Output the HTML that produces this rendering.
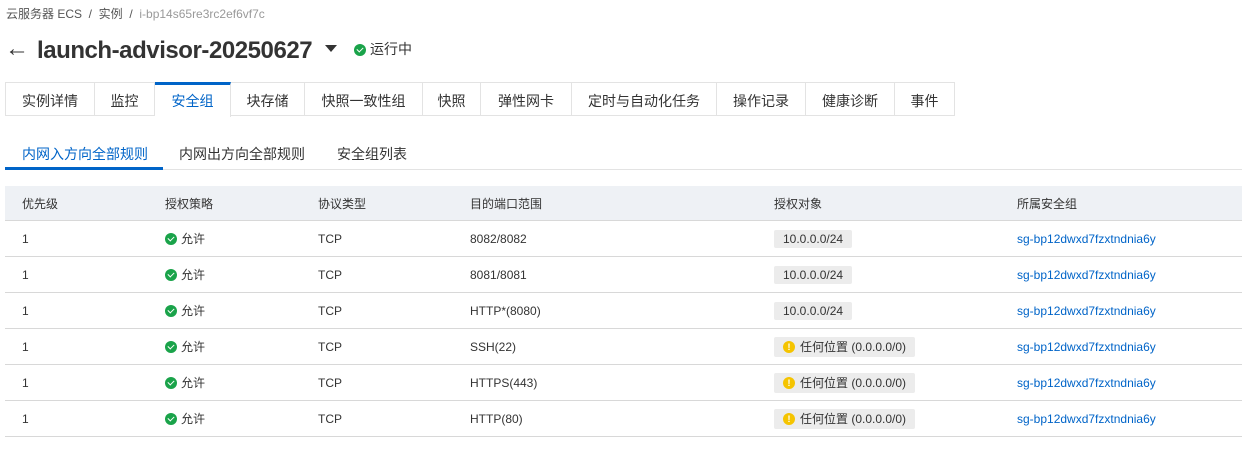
<!DOCTYPE html>
<html><head><meta charset="utf-8"><style>
body{margin:0;width:1242px;height:452px;background:#fff;font-family:"Liberation Sans","Noto Sans CJK SC",sans-serif;color:#333;position:relative;overflow:hidden}
.a{position:absolute;white-space:nowrap}
.tab{position:absolute;top:82px;height:34px;border:1px solid #e3e3e3;border-left:none;font-size:14px;line-height:36px;text-align:center;color:#333;box-sizing:border-box}
.row{position:absolute;left:5px;width:1237px;height:36px;border-bottom:1px solid #d8d8d8;font-size:12px;box-sizing:border-box}
.row span{position:absolute;top:0;line-height:36px}
.ok{display:inline-block;width:12px;height:12px;border-radius:50%;background:#1aa34a;vertical-align:-2px;margin-right:4px;position:relative}
.ok:after{content:"";position:absolute;left:3px;top:3px;width:5px;height:3px;border-left:1.5px solid #fff;border-bottom:1.5px solid #fff;transform:rotate(-45deg)}
.tag{background:#ececec;border-radius:2px;padding:0 9px;line-height:18px!important;top:9px!important;height:18px}
.warn{display:inline-block;width:12px;height:12px;border-radius:50%;background:#f5c400;vertical-align:top;margin:3px 5px 0 0;color:#fff;font-size:9px;line-height:12px;text-align:center;font-weight:bold;font-style:normal}
.lnk{color:#0064c8}
</style></head><body>
<div class="a" style="left:6px;top:5px;font-size:12px;color:#555">云服务器 ECS &nbsp;/&nbsp; 实例 &nbsp;/&nbsp; <span style="color:#999">i-bp14s65re3rc2ef6vf7c</span></div>
<div class="a" style="left:5px;top:33px;font-size:24px;color:#333;line-height:32px">←</div>
<div class="a" style="left:37px;top:35px;font-size:24px;font-weight:bold;color:#333;line-height:32px;letter-spacing:-0.45px">launch-advisor-20250627</div>
<div class="a" style="left:325px;top:45px;width:0;height:0;border-left:6px solid transparent;border-right:6px solid transparent;border-top:7px solid #333"></div>
<div class="a" style="left:354px;top:40px;font-size:14px;line-height:18px"><span class="ok"></span>运行中</div>
<div class="tab" style="left:5px;width:90px;border-left:1px solid #e3e3e3">实例详情</div>
<div class="tab" style="left:95px;width:60px">监控</div>
<div class="tab" style="left:155px;width:76px;border-top:3px solid #0064c8;border-bottom:none;color:#0064c8;line-height:32px;height:35px">安全组</div>
<div class="tab" style="left:231px;width:74px">块存储</div>
<div class="tab" style="left:305px;width:118px">快照一致性组</div>
<div class="tab" style="left:423px;width:58px">快照</div>
<div class="tab" style="left:481px;width:91px">弹性网卡</div>
<div class="tab" style="left:572px;width:145px">定时与自动化任务</div>
<div class="tab" style="left:717px;width:89px">操作记录</div>
<div class="tab" style="left:806px;width:89px">健康诊断</div>
<div class="tab" style="left:895px;width:60px">事件</div>
<div class="a" style="left:5px;top:169px;width:1237px;height:1px;background:#e3e3e3"></div>
<div class="a" style="left:5px;top:167px;width:158px;height:3px;background:#0064c8"></div>
<div class="a" style="left:22px;top:144px;font-size:14px;color:#0064c8">内网入方向全部规则</div>
<div class="a" style="left:179px;top:144px;font-size:14px">内网出方向全部规则</div>
<div class="a" style="left:337px;top:144px;font-size:14px">安全组列表</div>
<div class="row" style="top:186px;background:#eef1f5;height:35px"><span style="left:17px">优先级</span><span style="left:160px">授权策略</span><span style="left:313px">协议类型</span><span style="left:465px">目的端口范围</span><span style="left:769px">授权对象</span><span style="left:1012px">所属安全组</span></div>
<div class="row" style="top:221px"><span style="left:17px">1</span><span style="left:160px"><i class="ok"></i>允许</span><span style="left:313px">TCP</span><span style="left:465px">8082/8082</span><span class="tag" style="left:769px">10.0.0.0/24</span><span class="lnk" style="left:1012px">sg-bp12dwxd7fzxtndnia6y</span></div>
<div class="row" style="top:257px"><span style="left:17px">1</span><span style="left:160px"><i class="ok"></i>允许</span><span style="left:313px">TCP</span><span style="left:465px">8081/8081</span><span class="tag" style="left:769px">10.0.0.0/24</span><span class="lnk" style="left:1012px">sg-bp12dwxd7fzxtndnia6y</span></div>
<div class="row" style="top:293px"><span style="left:17px">1</span><span style="left:160px"><i class="ok"></i>允许</span><span style="left:313px">TCP</span><span style="left:465px">HTTP*(8080)</span><span class="tag" style="left:769px">10.0.0.0/24</span><span class="lnk" style="left:1012px">sg-bp12dwxd7fzxtndnia6y</span></div>
<div class="row" style="top:329px"><span style="left:17px">1</span><span style="left:160px"><i class="ok"></i>允许</span><span style="left:313px">TCP</span><span style="left:465px">SSH(22)</span><span class="tag" style="left:769px;top:8px!important;height:20px;line-height:20px!important"><i class="warn" style="margin-top:4px">!</i>任何位置 (0.0.0.0/0)</span><span class="lnk" style="left:1012px">sg-bp12dwxd7fzxtndnia6y</span></div>
<div class="row" style="top:365px"><span style="left:17px">1</span><span style="left:160px"><i class="ok"></i>允许</span><span style="left:313px">TCP</span><span style="left:465px">HTTPS(443)</span><span class="tag" style="left:769px;top:8px!important;height:20px;line-height:20px!important"><i class="warn" style="margin-top:4px">!</i>任何位置 (0.0.0.0/0)</span><span class="lnk" style="left:1012px">sg-bp12dwxd7fzxtndnia6y</span></div>
<div class="row" style="top:401px"><span style="left:17px">1</span><span style="left:160px"><i class="ok"></i>允许</span><span style="left:313px">TCP</span><span style="left:465px">HTTP(80)</span><span class="tag" style="left:769px;top:8px!important;height:20px;line-height:20px!important"><i class="warn" style="margin-top:4px">!</i>任何位置 (0.0.0.0/0)</span><span class="lnk" style="left:1012px">sg-bp12dwxd7fzxtndnia6y</span></div>
</body></html>
